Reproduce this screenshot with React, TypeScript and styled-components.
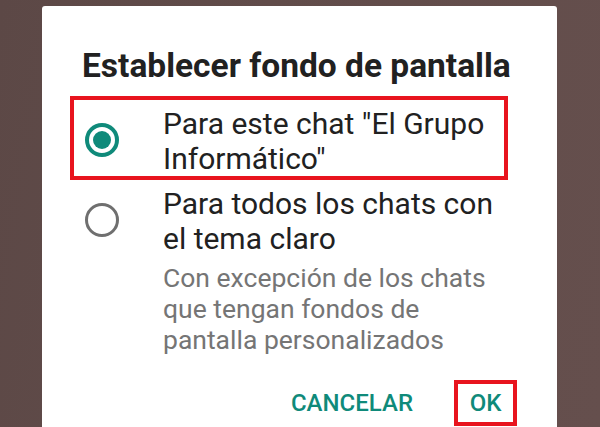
import React from "react";
import styled, { createGlobalStyle } from "styled-components";

const GlobalStyle = createGlobalStyle`
  html, body { margin: 0; padding: 0; }
  body {
    width: 600px;
    height: 427px;
    overflow: hidden;
    font-family: Roboto, "Noto Sans", "Liberation Sans", sans-serif;
  }
`;

const Backdrop = styled.div`
  width: 600px;
  height: 427px;
  box-sizing: border-box;
  padding: 6px 43px 0 42px;
  background: linear-gradient(100deg, #5c4846 0%, #614c4a 40%, #654f4d 100%);
  display: flex;
  overflow: hidden;
`;

const Dialog = styled.div`
  flex: 1;
  background: #ffffff;
  border-radius: 3px 3px 0 0;
  box-sizing: border-box;
  padding: 41px 0 0 0;
  display: flex;
  flex-direction: column;
`;

const Title = styled.h1`
  margin: 0 0 11px 40px;
  font-size: 33.5px;
  line-height: 38px;
  font-weight: 700;
  color: #212121;
  white-space: nowrap;
`;

const Options = styled.div`
  display: flex;
  flex-direction: column;
  padding-left: 28px;
`;

const OptionRow = styled.div<{ $highlighted?: boolean }>`
  width: 438px;
  box-sizing: border-box;
  border: 4px solid ${(p) => (p.$highlighted ? "#e8141e" : "transparent")};
  padding: 6px 0 0 11px;
  display: flex;
  align-items: flex-start;
  gap: 44px;
  & + & { margin-top: -4px; }
`;

const Radio = styled.div<{ $checked?: boolean }>`
  flex: none;
  width: 34px;
  height: 34px;
  margin-top: 17px;
  box-sizing: border-box;
  border-radius: 50%;
  border: ${(p) => (p.$checked ? "4px solid #0f8a7a" : "3px solid #6f6f6f")};
  display: flex;
  align-items: center;
  justify-content: center;
  &::after {
    content: "";
    display: ${(p) => (p.$checked ? "block" : "none")};
    width: 18px;
    height: 18px;
    border-radius: 50%;
    background: #0f8a7a;
  }
`;

const OptionText = styled.div`
  flex: 1;
  display: flex;
  flex-direction: column;
`;

const Label = styled.div`
  font-size: 30px;
  line-height: 35px;
  color: #212121;
`;

const Hint = styled.div`
  margin-top: 6px;
  font-size: 26.5px;
  line-height: 31px;
  color: #757575;
`;

const Actions = styled.div`
  margin-top: 21px;
  display: flex;
  justify-content: flex-end;
  align-items: center;
  gap: 29px;
  padding-right: 40px;
`;

const ActionButton = styled.div<{ $highlighted?: boolean }>`
  min-width: 63px;
  height: 46px;
  box-sizing: border-box;
  padding: 0 8px;
  border: 4px solid ${(p) => (p.$highlighted ? "#e8141e" : "transparent")};
  display: flex;
  align-items: center;
  justify-content: center;
  font-size: 24px;
  font-weight: 500;
  color: #0f8a7a;
  text-transform: uppercase;
`;

export default function App() {
  return (
    <>
      <GlobalStyle />
      <Backdrop>
        <Dialog>
          <Title>Establecer fondo de pantalla</Title>
          <Options>
            <OptionRow $highlighted>
              <Radio $checked />
              <OptionText>
                <Label>Para este chat "El Grupo Informático"</Label>
              </OptionText>
            </OptionRow>
            <OptionRow>
              <Radio />
              <OptionText>
                <Label>Para todos los chats con el tema claro</Label>
                <Hint>Con excepción de los chats que tengan fondos de pantalla personalizados</Hint>
              </OptionText>
            </OptionRow>
          </Options>
          <Actions>
            <ActionButton>Cancelar</ActionButton>
            <ActionButton $highlighted>OK</ActionButton>
          </Actions>
        </Dialog>
      </Backdrop>
    </>
  );
}
